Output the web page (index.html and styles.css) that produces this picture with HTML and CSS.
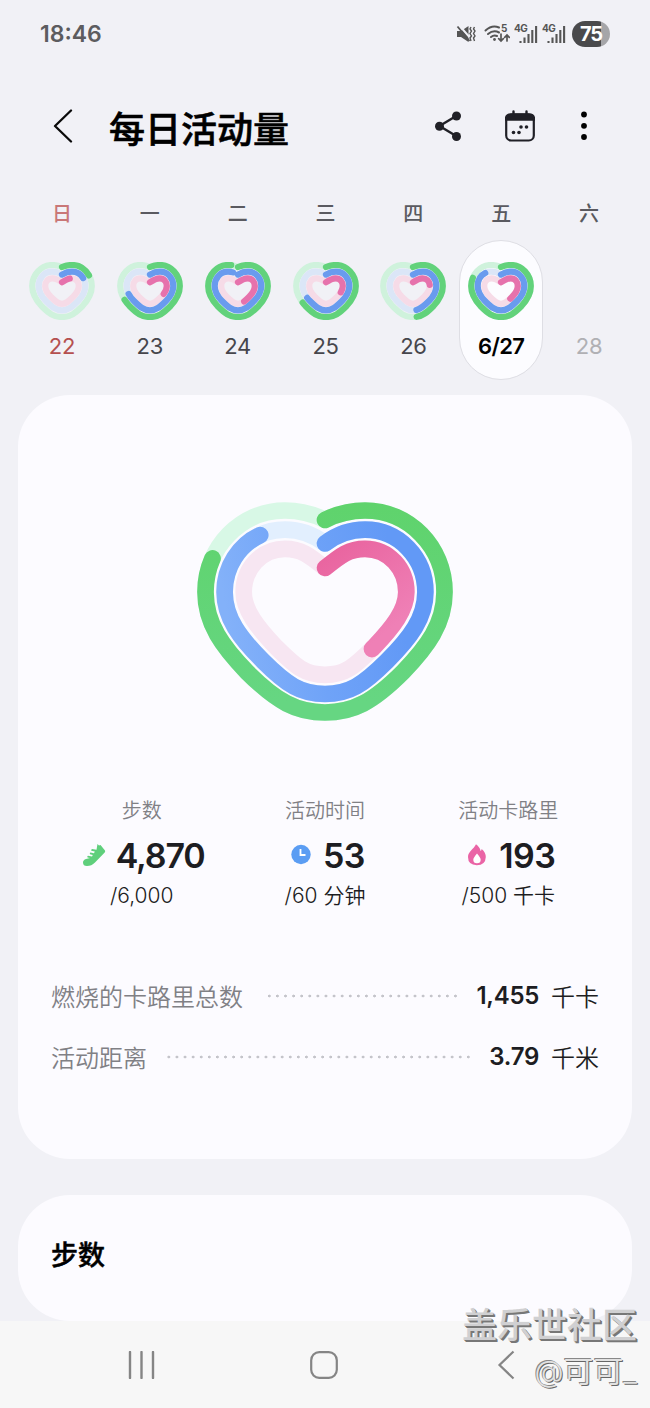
FILE: index.html
```html
<!DOCTYPE html>
<html lang="zh-CN">
<head>
    <meta charset="UTF-8">
    <meta name="viewport" content="width=device-width, initial-scale=1.0">
    <title>每日活动量</title>
    <link rel="stylesheet" href="styles.css">
</head>
<body>

<!-- shared heart rings, pathLength 100 so dashes are percentages -->
<svg class="defs" width="0" height="0">
    <defs>
        <linearGradient id="green" gradientUnits="userSpaceOnUse" x1="0" y1="0" x2="0" y2="200">
            <stop offset="0" stop-color="#5fd36c"/>
            <stop offset="1" stop-color="#66d682"/>
        </linearGradient>
        <linearGradient id="blue" gradientUnits="userSpaceOnUse" x1="20" y1="60" x2="190" y2="30">
            <stop offset="0" stop-color="#83b1f9"/>
            <stop offset="0.500" stop-color="#6fa3f8"/>
            <stop offset="1" stop-color="#6299f6"/>
        </linearGradient>
        <linearGradient id="pink" gradientUnits="userSpaceOnUse" x1="128" y1="50" x2="190" y2="130">
            <stop offset="0" stop-color="#e9649f"/>
            <stop offset="1" stop-color="#ef80b6"/>
        </linearGradient>
        <path id="big-outer" pathLength="100" d="M128 18C141 11.500 154 8.500 168 8.500C212 8.500 247.500 45 247.500 90C247.500 122 230 145 206 170C176 200 156 210.500 128 210.500C100 210.500 80 200 50 170C26 145 8.500 122 8.500 90C8.500 45 44 8.500 88 8.500C102 8.500 115 11.500 128 18"/>
        <path id="big-mid" pathLength="100" d="M128 41.500C140 32.500 153 27.700 168 27.700C202 27.700 228.400 56 228.400 90C228.400 116 213 136 190 159C166 183 152 192 128 192C104 192 90 183 66 159C43 136 27.600 116 27.600 90C27.600 56 54 27.700 88 27.700C103 27.700 116 32.500 128 41.500"/>
        <path id="big-inner" pathLength="100" d="M128 66C144 53 152 46.800 168 46.800C192 46.800 209.300 67 209.300 90C209.300 108 196 125 177 145C157 165 148 172.800 128 172.800C108 172.800 99 165 79 145C60 125 46.700 108 46.700 90C46.700 67 64 46.800 88 46.800C104 46.800 112 53 128 66"/>
        <path id="outer" pathLength="100" d="M33 5C36.500 3.500 39.500 3 43 3C54 3 62.800 13 62.800 24C62.800 32 59 38 53.500 44C46 51.500 41.500 55 33 55C24.500 55 20 51.500 12.500 44C7 38 3.200 32 3.200 24C3.200 13 12 3 23 3C26.500 3 29.500 3.500 33 5"/>
        <path id="mid" pathLength="100" d="M33 12.600C36.500 10.500 39.500 9.700 43 9.700C51 9.700 56.300 16.500 56.300 24C56.300 30 53.500 34.500 49 39C43 45 39 48.400 33 48.400C27 48.400 23 45 17 39C12.500 34.500 9.700 30 9.700 24C9.700 16.500 15 9.700 23 9.700C26.500 9.700 29.500 10.500 33 12.600"/>
        <path id="inner" pathLength="100" d="M33 20.300C37 17.500 39.500 16.300 42.500 16.300C47 16.300 49.800 19.800 49.800 24C49.800 28 47 32 44 35C39.500 39.500 37 41.800 33 41.800C29 41.800 26.500 39.500 22 35C19 32 16.200 28 16.200 24C16.200 19.800 19 16.300 23.500 16.300C26.500 16.300 29 17.500 33 20.300"/>
        <g id="tracks">
            <use href="#outer" stroke="#cff2dc"/>
            <use href="#mid" stroke="#dbe6f7"/>
            <use href="#inner" stroke="#f6dbe7"/>
        </g>
    </defs>
</svg>

<div class="screen">
    <div class="status-bar">
        <span class="time">18:46</span>
        <div class="status-icons">
            <svg class="mute" width="20" height="20" viewBox="0 0 20 20">
                <path d="M1 7h4l7.500-5v16L5 13H1z" fill="#555"/>
                <path d="M2.500 .5L16 16" stroke="#f1f1f6" stroke-width="2"/>
                <path d="M1.500 2.500L13.500 17" stroke="#555" stroke-width="1.800"/>
                <path d="M15 3l-1 2 1.500 2-1.500 2.500 1.500 2.500-1.500 2 1 3M18.500 3L17.500 5l1.500 2-1.500 2.500 1.500 2.500-1.500 2 1 3" fill="none" stroke="#555" stroke-width="1.400"/>
            </svg>
            <svg width="26" height="22" viewBox="0 0 26 22">
                <g fill="none" stroke="#555" stroke-width="2" stroke-linecap="round">
                    <path d="M1.500 7.500Q8 1.500 15 4.500M4 11Q9.500 6.500 15 9.500M7 14Q10 11.500 13 13"/>
                    <path d="M17 11v7m-2.300-2.300L17 18l2.300-2.300M23 18v-6m-2.300 2.300L23 12l2.300 2.300" stroke-width="1.700"/>
                </g>
                <circle cx="10.500" cy="16.500" r="1.400" fill="#555"/>
                <text x="17" y="9" class="tiny">5</text>
            </svg>
            <svg width="24" height="22" viewBox="0 0 24 22">
                <text x="0" y="9" class="tiny">4G</text>
                <path d="M6.500 18v2M10.500 14.500V20M14.500 11v9M18.300 7v13M22.100 3v17" stroke="#555" stroke-width="2.100"/>
            </svg>
            <svg width="24" height="22" viewBox="0 0 24 22">
                <text x="0" y="9" class="tiny">4G</text>
                <path d="M6.500 18v2M10.500 14.500V20M14.500 11v9M18.300 7v13M22.100 3v17" stroke="#555" stroke-width="2.100"/>
            </svg>
            <span class="battery">75</span>
        </div>
    </div>

    <div class="header">
        <svg class="back" width="20" height="34" viewBox="0 0 20 34"><path d="M18 1.500L2 17l16 15.500" fill="none" stroke="#0a0a0a" stroke-width="2.300" stroke-linejoin="round" stroke-linecap="round"/></svg>
        <h1>每日活动量</h1>
        <div class="actions">
            <svg width="28" height="30" viewBox="0 0 28 30">
                <path d="M22 4.500L4.500 15L22 25.500" fill="none" stroke="#202026" stroke-width="2.400"/>
                <g fill="#202026"><circle cx="21.500" cy="5" r="4.500"/><circle cx="4.500" cy="15.300" r="4.500"/><circle cx="21.500" cy="25.500" r="4.500"/></g>
            </svg>
            <svg width="30" height="32" viewBox="0 0 30 32">
                <rect x="1.200" y="4.500" width="27.600" height="26" rx="5" fill="none" stroke="#202026" stroke-width="2.200"/>
                <path d="M1 9.500V9q0-4.500 5-4.500h18q5 0 5 4.500v.5zM8.500 5V1.500M21.500 5V1.500" fill="#202026" stroke="#202026" stroke-width="2.400" stroke-linecap="round"/>
                <g fill="#202026"><circle cx="16" cy="17" r="1.800"/><circle cx="21.500" cy="17" r="1.800"/><circle cx="8.500" cy="22.500" r="1.800"/><circle cx="14" cy="22.500" r="1.800"/></g>
            </svg>
            <svg class="more" width="6" height="30" viewBox="0 0 6 30"><circle cx="3" cy="3.500" r="2.900"/><circle cx="3" cy="14.800" r="2.900"/><circle cx="3" cy="26" r="2.900"/></svg>
        </div>
    </div>

    <div class="week">
        <div class="day sunday">
            <span class="weekday">日</span>
            <div class="pill">
                <svg class="mini" viewBox="0 0 66 58">
                    <use href="#tracks"/>
                    <use href="#outer" class="g" stroke-dasharray="17.500 200"/>
                    <use href="#mid" class="b" stroke-dasharray="17.500 200"/>
                    <use href="#inner" class="p" stroke-dasharray="9 200"/>
                </svg>
                <span class="date">22</span>
            </div>
        </div>
        <div class="day">
            <span class="weekday">一</span>
            <div class="pill">
                <svg class="mini" viewBox="0 0 66 58">
                    <use href="#tracks"/>
                    <use href="#outer" class="g" stroke-dasharray="68 200"/>
                    <use href="#mid" class="b" stroke-dasharray="70.500 200"/>
                    <use href="#inner" class="p" stroke-dasharray="32 200"/>
                </svg>
                <span class="date">23</span>
            </div>
        </div>
        <div class="day">
            <span class="weekday">二</span>
            <div class="pill">
                <svg class="mini" viewBox="0 0 66 58">
                    <use href="#tracks"/>
                    <use href="#outer" class="g" stroke-dasharray="96 200"/>
                    <use href="#mid" class="b" stroke-dasharray="96 200"/>
                    <use href="#inner" class="p" stroke-dasharray="43 200"/>
                </svg>
                <span class="date">24</span>
            </div>
        </div>
        <div class="day">
            <span class="weekday">三</span>
            <div class="pill">
                <svg class="mini" viewBox="0 0 66 58">
                    <use href="#tracks"/>
                    <use href="#outer" class="g" stroke-dasharray="66 200"/>
                    <use href="#mid" class="b" stroke-dasharray="67 200"/>
                    <use href="#inner" class="p" stroke-dasharray="30 200"/>
                </svg>
                <span class="date">25</span>
            </div>
        </div>
        <div class="day">
            <span class="weekday">四</span>
            <div class="pill">
                <svg class="mini" viewBox="0 0 66 58">
                    <use href="#tracks"/>
                    <use href="#outer" class="g" stroke-dasharray="48 200"/>
                    <use href="#mid" class="b" stroke-dasharray="47.500 200"/>
                    <use href="#inner" class="p" stroke-dasharray="22 200"/>
                </svg>
                <span class="date">26</span>
            </div>
        </div>
        <div class="day today">
            <span class="weekday">五</span>
            <div class="pill">
                <svg class="mini" viewBox="0 0 66 58">
                    <use href="#tracks"/>
                    <use href="#outer" class="g" stroke-dasharray="81 200"/>
                    <use href="#mid" class="b" stroke-dasharray="88 200"/>
                    <use href="#inner" class="p" stroke-dasharray="38.600 200"/>
                </svg>
                <span class="date">6/27</span>
            </div>
        </div>
        <div class="day future">
            <span class="weekday">六</span>
            <div class="pill">
                <div class="mini"></div>
                <span class="date">28</span>
            </div>
        </div>
    </div>

    <div class="card summary">
        <svg class="heart" viewBox="0 0 256 219">
            <use href="#big-outer" stroke="#d8f8e6"/>
            <use href="#big-mid" stroke="#e2effe"/>
            <use href="#big-inner" stroke="#f7e6f2"/>
            <use href="#big-outer" stroke="url(#green)" stroke-dasharray="81 200"/>
            <use href="#big-mid" stroke="url(#blue)" stroke-dasharray="88.300 200"/>
            <use href="#big-inner" stroke="url(#pink)" stroke-dasharray="38.200 200"/>
        </svg>

        <div class="stats">
            <div class="stat">
                <span class="label">步数</span>
                <div class="value steps-value">
                    <svg width="24" height="24" viewBox="0 0 24 24"><path d="M15.500 1l1.500 1.500 1.500-.5 4.500 5.500q.5 1-.3 2L13 19.500Q9.500 23 5 23 1 23 1 19.500 1 17 4 16l4-1-2.500-.6q-.6-1.300.5-1.700l4 .7.800-1.500-2.800-.7q-.7-1.300.5-1.700l3.500.7.8-1.600-3.600-.8q-.2-1.500 1-1.700l4.300.6Z" fill="#5fcf7c"/></svg>
                    <strong>4,870</strong>
                </div>
                <span class="goal">/6,000</span>
            </div>
            <div class="stat">
                <span class="label">活动时间</span>
                <div class="value">
                    <svg width="20" height="22" viewBox="0 0 20 22"><circle cx="10" cy="10.500" r="9.700" fill="#5b9df3"/><path d="M9.500 5v6h5" fill="none" stroke="#fff" stroke-width="1.800"/></svg>
                    <strong>53</strong>
                </div>
                <span class="goal">/60 分钟</span>
            </div>
            <div class="stat">
                <span class="label">活动卡路里</span>
                <div class="value">
                    <svg width="20" height="22" viewBox="0 0 20 22"><path d="M9 .3Q13 3.200 13.500 7q1-.4 1.200-2Q18.800 8.500 18.800 13 18.500 21.200 9.800 21.200 1 21 1 13C1 7.500 6.500 5.500 9 .3Z" fill="#ea64a6"/><path d="M10 9.500q3.700 4.200 3.700 6.200 0 3.500-3.700 3.500t-3.700-3.500q0-2 3.700-6.200Z" fill="#fff"/></svg>
                    <strong>193</strong>
                </div>
                <span class="goal">/500 千卡</span>
            </div>
        </div>

        <div class="row">
            <span class="name">燃烧的卡路里总数</span>
            <span class="dots"></span>
            <strong>1,455</strong>
            <span class="unit">千卡</span>
        </div>
        <div class="row distance">
            <span class="name">活动距离</span>
            <span class="dots"></span>
            <strong>3.79</strong>
            <span class="unit">千米</span>
        </div>
    </div>

    <div class="card steps">
        <h2>步数</h2>
    </div>

    <div class="nav-bar">
        <svg width="28" height="28" viewBox="0 0 28 28"><path d="M2 1v26M13.500 1v26M25 1v26" stroke="#858585" stroke-width="2.400" stroke-linecap="round"/></svg>
        <svg width="28" height="28" viewBox="0 0 28 28"><rect x="1.200" y="1.200" width="25.600" height="25.600" rx="8" fill="none" stroke="#858585" stroke-width="2.200"/></svg>
        <svg width="28" height="30" viewBox="0 0 28 30"><path d="M22.500 1.500L8.500 15l14 13.500" fill="none" stroke="#858585" stroke-width="2.200"/></svg>
    </div>

    <div class="watermark">
        <div class="community">盖乐世社区</div>
        <div class="user">@可可_</div>
    </div>
</div>

</body>
</html>
```
FILE: styles.css
```css
body {
    margin: 0;
    background-color: #f1f1f6;
    font-family: Inter, "Noto Sans CJK SC", sans-serif;
    color: #1d1d22;
}
.defs {
    position: absolute;
}
.screen {
    position: relative;
    width: 650px;
    height: 1408px;
    overflow: hidden;
}
svg {
    flex-shrink: 0;
}

/* status bar */
.status-bar {
    display: flex;
    justify-content: space-between;
    align-items: center;
    height: 68px;
    padding: 0 40px;
    box-sizing: border-box;
}
.time {
    font-size: 23px;
    font-weight: 600;
    color: #5c5c5f;
}
.status-icons {
    display: flex;
    align-items: center;
    gap: 4px;
}
.mute {
    margin-right: 4px;
}
.tiny {
    font-size: 10px;
    font-weight: 700;
    letter-spacing: -0.5px;
    fill: #555;
}
.battery {
    width: 38px;
    height: 26px;
    border-radius: 13px;
    background: linear-gradient(to right, #4a4a4c 76%, #a5a5a8 76%);
    color: #fff;
    font-size: 20px;
    font-weight: 700;
    line-height: 26px;
    text-align: center;
    letter-spacing: -1px;
    margin-left: 2px;
}

/* title */
.header {
    display: flex;
    align-items: center;
    height: 116px;
    padding: 0 63px 0 53px;
}
.header h1 {
    margin: 7px 0 0 36px;
    font-size: 36px;
    font-weight: 500;
    line-height: 48px;
    color: #000;
    -webkit-text-stroke: 0.600px #000;
}
.actions {
    display: flex;
    align-items: center;
    gap: 42px;
    margin-left: auto;
}
.more {
    margin-left: 4px;
}

/* week strip */
.week {
    display: flex;
    padding: 0 17px 0 18px;
}
.day {
    display: flex;
    flex: 1;
    flex-direction: column;
    align-items: center;
}
.weekday {
    height: 56px;
    line-height: 61px;
    font-size: 20px;
    font-weight: 500;
    color: #5a5a60;
}
.pill {
    display: flex;
    flex-direction: column;
    align-items: center;
    width: 84px;
    height: 140px;
    padding-top: 21px;
    box-sizing: border-box;
    border: 1px solid transparent;
    border-radius: 42px;
}
.mini {
    width: 66px;
    height: 58px;
    fill: none;
    stroke-width: 6.200px;
    stroke-linecap: round;
}
.g {
    stroke: #62d27b;
}
.b {
    stroke: #699bee;
}
.p {
    stroke: #e672ac;
}
.date {
    margin-top: 14px;
    font-size: 22px;
    line-height: 24px;
    letter-spacing: -0.3px;
    color: #46464c;
}
.sunday .weekday {
    color: #c97777;
}
.sunday .date {
    color: #b5504f;
}
.today .pill {
    background-color: #fcfcff;
    border-color: #dedee4;
}
.today .date {
    font-weight: 600;
    letter-spacing: -0.6px;
    color: #000;
}
.future .date {
    color: #b0b0b4;
}

/* cards */
.card {
    margin: 0 18px;
    padding: 0 32px;
    box-sizing: border-box;
    border-radius: 52px;
    background-color: #fcfbff;
}
.summary {
    height: 764px;
    margin-top: 15px;
    padding-top: 107px;
}
.heart {
    display: block;
    width: 256px;
    height: 219px;
    margin: 0 auto;
    fill: none;
    stroke-width: 16.700px;
    stroke-linecap: round;
}
.stats {
    display: flex;
    margin-top: 75px;
    margin-bottom: 54px;
}
.stat {
    display: flex;
    flex: 1;
    flex-direction: column;
    align-items: center;
}
.label {
    font-size: 20px;
    font-weight: 350;
    line-height: 30px;
    color: #808085;
}
.value {
    display: flex;
    align-items: center;
    gap: 12px;
    height: 40px;
    margin-top: 9px;
    padding-left: 6px;
}
.value strong {
    font-size: 34px;
    font-weight: 600;
    letter-spacing: -0.5px;
}
.steps-value {
    gap: 10px;
    padding-left: 3px;
}
.steps-value strong {
    letter-spacing: -1.200px;
}
.goal {
    font-size: 21px;
    font-weight: 350;
    line-height: 30px;
    margin-top: 6px;
}
.row {
    display: flex;
    align-items: center;
    height: 61px;
    padding: 0 1px;
    font-size: 24px;
    font-weight: 350;
}
.name {
    color: #808085;
}
.dots {
    flex: 1;
    height: 8px;
    margin: 0 17px 0 22px;
    background: radial-gradient(circle, #c4c4ca 1.200px, transparent 1.700px) right center / 8.100px 8px repeat-x;
}
.distance .dots {
    margin-left: 18px;
}
.row strong {
    font-weight: 600;
    letter-spacing: -0.300px;
}
.unit {
    margin-left: 12px;
}
.steps {
    height: 126px;
    margin-top: 36px;
}
.steps h2 {
    margin: 0 1px;
    font-size: 27px;
    font-weight: 500;
    line-height: 121px;
    color: #000;
    -webkit-text-stroke: 0.500px #000;
}

/* navigation bar */
.nav-bar {
    display: flex;
    justify-content: space-between;
    align-items: center;
    height: 87px;
    padding: 0 131px 0 128px;
    background-color: #f7f7f7;
}

/* watermark over the bottom corner */
.watermark {
    position: absolute;
    right: 13px;
    bottom: 14px;
    text-align: right;
    color: #d0d0d2;
    text-shadow: 1px 1px 0 #777, 2px 2px 0 #777;
}
.community {
    font-size: 35px;
    font-weight: 500;
    line-height: 46px;
}
.user {
    font-size: 30px;
    font-weight: 350;
    line-height: 46px;
    color: #e2e2e2;
    text-shadow: 1px 1px 0 #666, -1px -1px 0 #888;
}
```
